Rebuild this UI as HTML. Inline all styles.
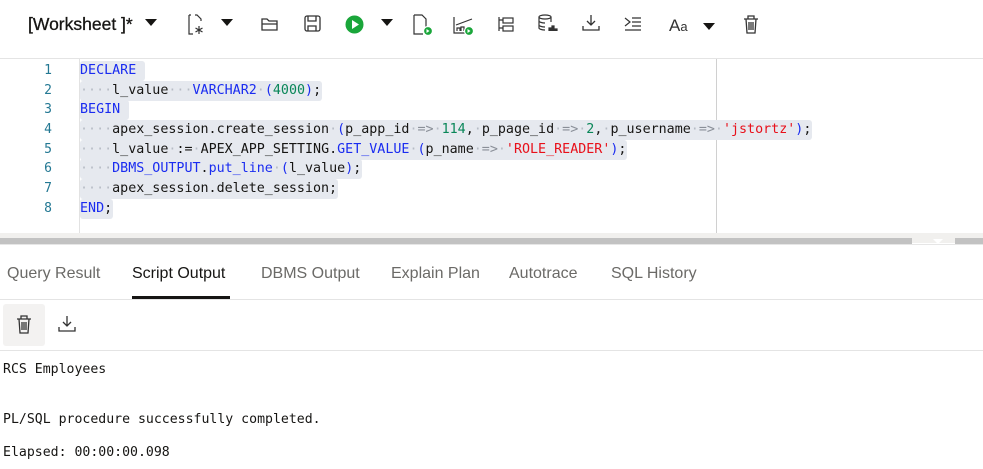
<!DOCTYPE html>
<html><head><meta charset="utf-8"><style>
*{margin:0;padding:0;box-sizing:border-box}
body{width:983px;height:469px;background:#fff;position:relative;overflow:hidden;font-family:"Liberation Sans",sans-serif;color:#161513}
.abs{position:absolute}
.mono{font-family:"DejaVu Sans Mono","Liberation Mono",monospace;font-size:13.35px}
.ln{position:absolute;left:30px;width:22px;text-align:right;color:#237893;font-family:"DejaVu Sans Mono",monospace;font-size:13px}
.cl{position:absolute;left:80px;height:20px;line-height:20px;white-space:pre}
.cl span.h{background:#e6e9ef;border-radius:3px;display:inline-block;height:20px;padding-right:1px}
.k{color:#1a2cf0}.n{color:#098658}.s{color:#e8101a}.d{color:#b7bcc5}.o{color:#8a8f98}
.tab{position:absolute;top:265px;font-size:16px;color:#6b6a67}
.out{position:absolute;left:3px;font-family:"DejaVu Sans Mono",monospace;font-size:13.2px;color:#161513;white-space:pre}
svg{position:absolute}
</style></head><body>
<!-- toolbar -->
<div class="abs" style="left:28px;top:14px;font-size:17.5px;color:#161513;-webkit-text-stroke:0.3px #161513">[Worksheet ]*</div>
<svg style="left:145px;top:19px" width="12" height="8"><path d="M0 0h12L6 7z" fill="#161513"/></svg>
<svg style="left:188px;top:14px" width="20" height="22" fill="none" stroke="#333" stroke-width="1.2"><path d="M7 1h2l4 4v2M1 1h2M1 1v19h4"/><path d="M11 12v8M7.5 14l7 4M14.5 14l-7 4"/></svg>
<svg style="left:221px;top:19px" width="12" height="8"><path d="M0 0h12L6 7z" fill="#161513"/></svg>
<svg style="left:261px;top:16px" width="18" height="16" fill="none" stroke="#333" stroke-width="1.3"><path d="M1 3h5l2 2h8v9H1z M1 8h15"/></svg>
<svg style="left:304px;top:15px" width="17" height="17" fill="none" stroke="#333" stroke-width="1.3"><rect x="1" y="1" width="15" height="15" rx="2"/><path d="M4 1v5h8V1M4 16v-5h8v5"/></svg>
<svg style="left:345px;top:15px" width="19" height="19"><circle cx="9.5" cy="9.5" r="9" fill="#1aa63a"/><path d="M7 5l7 4.5-7 4.5z" fill="#fff"/></svg>
<svg style="left:381px;top:19px" width="12" height="8"><path d="M0 0h12L6 7z" fill="#161513"/></svg>
<svg style="left:413px;top:14px" width="20" height="22" fill="none" stroke="#333" stroke-width="1.2"><path d="M1 1h8l4 4v9M1 1v19h9"/><circle cx="15" cy="17" r="4.5" fill="#1aa63a" stroke="#fff"/><path d="M13.5 15l3 2-3 2z" fill="#fff" stroke="none"/></svg>
<svg style="left:453px;top:15px" width="22" height="21" fill="none" stroke="#333" stroke-width="1.2"><path d="M1 2v16h12M3 10l16-6M4 16v-3h3v3M8 16v-4h3v4"/><circle cx="16" cy="16" r="4.5" fill="#1aa63a" stroke="#fff"/><path d="M14.5 14l3 2-3 2z" fill="#fff" stroke="none"/></svg>
<svg style="left:497px;top:16px" width="18" height="17" fill="none" stroke="#333" stroke-width="1.2"><path d="M2 1v14M2 4h4M2 12h4"/><rect x="6" y="2" width="10" height="5"/><rect x="6" y="10" width="10" height="5"/></svg>
<svg style="left:538px;top:14px" width="20" height="21" fill="none" stroke="#333" stroke-width="1.2"><ellipse cx="7" cy="3" rx="6" ry="2"/><path d="M1 3v11c0 1 3 2 6 2M13 3v5M1 7c0 1 3 2 6 2M1 11c0 1 3 2 6 2"/><path d="M11 17v-3h2v3M14 17v-5h2v5M17 17v-2h2v2" fill="#333"/></svg>
<svg style="left:582px;top:14px" width="18" height="18" fill="none" stroke="#333" stroke-width="1.3"><path d="M9 1v10M5 7l4 4 4-4M1 12v4h16v-4"/></svg>
<svg style="left:624px;top:17px" width="18" height="15" fill="none" stroke="#333" stroke-width="1.2"><path d="M1 1l5 4-5 4M1 13h16M8 5h9M8 9h9M8 1h9"/></svg>
<div class="abs" style="left:669px;top:16px;font-size:17px;color:#333">A<span style="font-size:13px">a</span></div>
<svg style="left:703px;top:23px" width="12" height="8"><path d="M0 0h12L6 7z" fill="#161513"/></svg>
<svg style="left:743px;top:15px" width="16" height="19" fill="none" stroke="#333" stroke-width="1.3"><path d="M1 4h14M5 4V1h6v3M3 4l1 14h8l1-14M6 7v8M8 7v8M10 7v8"/></svg>
<div class="abs" style="left:0;top:58px;width:983px;height:1px;background:#e4e4e4"></div>
<!-- editor -->
<div class="abs" style="left:79px;top:59px;width:1px;height:174px;background:#e2e2e2"></div>
<div class="abs" style="left:716px;top:59px;width:1px;height:174px;background:#d0d0d0"></div>
<div class="ln" style="top:63px">1</div><div class="ln" style="top:83px">2</div><div class="ln" style="top:102px">3</div><div class="ln" style="top:122px">4</div><div class="ln" style="top:142px">5</div><div class="ln" style="top:161px">6</div><div class="ln" style="top:181px">7</div><div class="ln" style="top:201px">8</div>
<div class="mono">
<div class="cl" style="top:61px"><span class="h"><span class="k">DECLARE</span> </span></div>
<div class="cl" style="top:81px"><span class="h"><span class="d">····</span>l_value<span class="d">···</span><span class="k">VARCHAR2</span><span class="d">·</span><span class="k">(</span><span class="n">4000</span><span class="k">)</span>;</span></div>
<div class="cl" style="top:100px"><span class="h"><span class="k">BEGIN</span> </span></div>
<div class="cl" style="top:120px"><span class="h"><span class="d">····</span>apex_session.create_session<span class="d">·</span><span class="k">(</span>p_app_id<span class="d">·</span><span class="o">=&gt;</span><span class="d">·</span><span class="n">114</span>,<span class="d">·</span>p_page_id<span class="d">·</span><span class="o">=&gt;</span><span class="d">·</span><span class="n">2</span>,<span class="d">·</span>p_username<span class="d">·</span><span class="o">=&gt;</span><span class="d">·</span><span class="s">'jstortz'</span><span class="k">)</span>;</span></div>
<div class="cl" style="top:140px"><span class="h"><span class="d">····</span>l_value<span class="d">·</span>:=<span class="d">·</span>APEX_APP_SETTING.<span class="k">GET_VALUE</span><span class="d">·</span><span class="k">(</span>p_name<span class="d">·</span><span class="o">=&gt;</span><span class="d">·</span><span class="s">'ROLE_READER'</span><span class="k">)</span>;</span></div>
<div class="cl" style="top:159px"><span class="h"><span class="d">····</span><span class="k">DBMS_OUTPUT</span>.<span class="k">put_line</span><span class="d">·</span><span class="k">(</span>l_value<span class="k">)</span>;</span></div>
<div class="cl" style="top:179px"><span class="h"><span class="d">····</span>apex_session.delete_session;</span></div>
<div class="cl" style="top:199px"><span class="h"><span class="k">END</span>;</span></div>
</div>
<!-- splitter -->
<div class="abs" style="left:0;top:233px;width:983px;height:10px;background:#f1f0ee"></div>
<div class="abs" style="left:0;top:238px;width:912px;height:6px;background:#c2c2c2"></div>
<div class="abs" style="left:955px;top:238px;width:28px;height:6px;background:#c2c2c2"></div>
<svg style="left:933px;top:239px" width="10" height="5"><path d="M0 0h10L5 5z" fill="#fff"/></svg>
<div class="abs" style="left:0;top:244px;width:983px;height:1px;background:#e6e6e6"></div>
<!-- tabs -->
<div class="tab" style="left:7px">Query Result</div>
<div class="tab" style="left:132px;color:#161513">Script Output</div>
<div class="tab" style="left:261px">DBMS Output</div>
<div class="tab" style="left:391px">Explain Plan</div>
<div class="tab" style="left:509px">Autotrace</div>
<div class="tab" style="left:611px">SQL History</div>
<div class="abs" style="left:132px;top:296px;width:98px;height:3px;background:#161513"></div>
<div class="abs" style="left:0;top:299px;width:983px;height:1px;background:#e4e4e4"></div>
<div class="abs" style="left:3px;top:304px;width:42px;height:42px;background:#f3f2f1;border-radius:3px"></div>
<svg style="left:16px;top:315px" width="16" height="19" fill="none" stroke="#333" stroke-width="1.3"><path d="M1 4h14M5 4V1h6v3M3 4l1 14h8l1-14M6 7v8M8 7v8M10 7v8"/></svg>
<svg style="left:58px;top:315px" width="18" height="18" fill="none" stroke="#333" stroke-width="1.3"><path d="M9 1v10M5 7l4 4 4-4M1 12v4h16v-4"/></svg>
<div class="abs" style="left:0;top:350px;width:983px;height:1px;background:#e4e4e4"></div>
<div class="out" style="top:362px">RCS Employees</div>
<div class="out" style="top:412px">PL/SQL procedure successfully completed.</div>
<div class="out" style="top:445px">Elapsed: 00:00:00.098</div>
</body></html>
